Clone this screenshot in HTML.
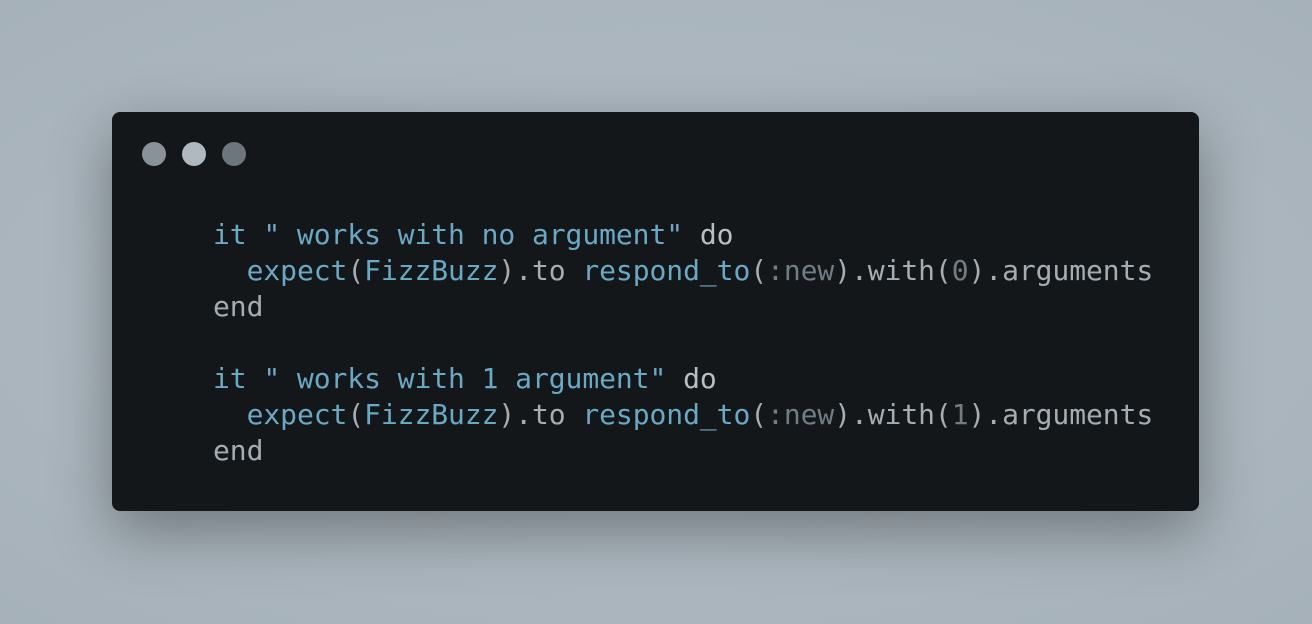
<!DOCTYPE html>
<html><head><style>
html,body{margin:0;padding:0;width:1312px;height:624px;overflow:hidden;background:radial-gradient(ellipse at center,#b3bec6 0%,#a6b1b9 100%);}
.win{position:absolute;left:112px;top:112px;width:1087px;height:399px;background:#141719;border-radius:8px;box-shadow:0 20px 60px rgba(0,0,0,0.35);}
.dot{position:absolute;top:30px;width:24px;height:24px;border-radius:50%;}
pre{position:absolute;left:101px;top:105px;margin:0;font-family:"DejaVu Sans Mono","Liberation Mono",monospace;font-size:28px;letter-spacing:-0.07px;line-height:36px;color:#a4adb4;}
.b{color:#6ba8c3}.g{color:#a4adb4}.d{color:#727c83}.w{color:#b8bfc4}
</style></head><body>
<div class="win">
<div class="dot" style="left:30px;background:#8a9299"></div>
<div class="dot" style="left:70px;background:#b1b9c0"></div>
<div class="dot" style="left:110px;background:#6e767d"></div>
<pre><span class="b">it " works with no argument"</span> <span class="w">do</span>
  <span class="b">expect</span>(<span class="b">FizzBuzz</span>).to <span class="b">respond_to</span>(<span class="d">:new</span>).with(<span class="d">0</span>).arguments
end

<span class="b">it " works with 1 argument"</span> <span class="w">do</span>
  <span class="b">expect</span>(<span class="b">FizzBuzz</span>).to <span class="b">respond_to</span>(<span class="d">:new</span>).with(<span class="d">1</span>).arguments
end</pre>
</div>
</body></html>
